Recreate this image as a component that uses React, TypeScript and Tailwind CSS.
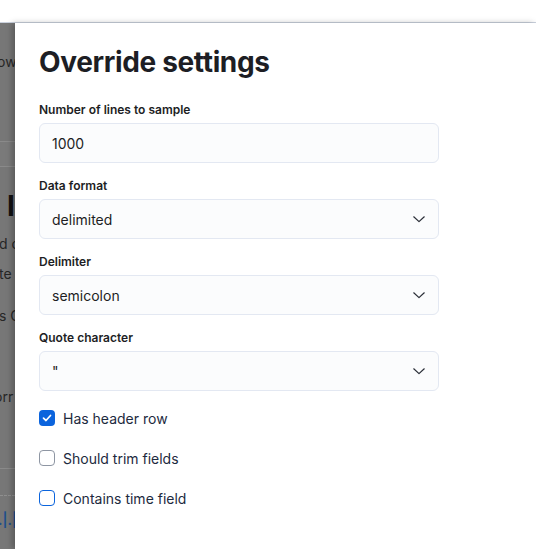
import React from "react";

const font = { fontFamily: "Inter, 'Noto Sans', sans-serif" };

function Chevron() {
  return (
    <svg width="14" height="14" viewBox="0 0 16 16" fill="none">
      <path d="M2 5.5 L8 11 L14 5.5" stroke="#2b2f38" strokeWidth="1.4" strokeLinecap="round" strokeLinejoin="round" />
    </svg>
  );
}

function Field({ label, value, select }: { label: string; value: string; select?: boolean }) {
  return (
    <div className="mb-[16px] w-[400px]">
      <div className="text-[12px] leading-[14px] font-semibold text-[#1d1e24] mb-[6px]">{label}</div>
      <div className="h-[40px] rounded-[6px] border border-[#e3e8f2] bg-[#fbfcfd] flex items-center pl-[12px] pr-[12px]">
        <span className="flex-1 text-[14px] text-[#1d1e24]">{value}</span>
        {select && <Chevron />}
      </div>
    </div>
  );
}

function Check({ label, state }: { label: string; state: "checked" | "empty" | "focus" }) {
  return (
    <div className="h-[40px] flex items-center gap-[8px]">
      {state === "checked" ? (
        <div className="w-[16px] h-[16px] rounded-[4px] bg-[#0b64dd] flex items-center justify-center">
          <svg width="10" height="10" viewBox="0 0 10 10" fill="none">
            <path d="M1.5 5.2 L4 7.5 L8.5 2.5" stroke="white" strokeWidth="1.7" strokeLinecap="round" strokeLinejoin="round" />
          </svg>
        </div>
      ) : (
        <div
          className={
            "w-[16px] h-[16px] rounded-[4px] bg-white border " +
            (state === "focus" ? "border-[#0b64dd]" : "border-[#8e96a3]")
          }
        />
      )}
      <span className="text-[14px] text-[#1d2a3e]">{label}</span>
    </div>
  );
}

export default function App() {
  return (
    <div className="w-[536px] h-[549px] overflow-hidden bg-white flex flex-col" style={font}>
      <div className="h-[23px] shrink-0 bg-white border-b border-[#cbd2de]" />
      <div className="flex-1 flex min-h-0">
        <div className="w-[15px] shrink-0 bg-[#777777] overflow-hidden flex flex-col text-[14px] text-[#262626] whitespace-nowrap">
          <div className="h-[28px]" />
          <div className="h-[22px] leading-[22px] ml-[-3px]">ow</div>
          <div className="h-[68px]" />
          <div className="h-[1px] bg-[#8a8a8a]" />
          <div className="h-[24px] bg-[#7a7a7a]" />
          <div className="h-[1px] bg-[#8a8a8a]" />
          <div className="h-[24px]" />
          <div className="h-[30px] leading-[30px] text-[28px] font-bold text-[#111] ml-[7px]">I</div>
          <div className="h-[12px]" />
          <div className="h-[22px] leading-[22px] ml-[-1px]">d c</div>
          <div className="h-[8px]" />
          <div className="h-[22px] leading-[22px] ml-[-1px]">te</div>
          <div className="h-[20px]" />
          <div className="h-[22px] leading-[22px] ml-[-1px]">s C</div>
          <div className="h-[59px]" />
          <div className="h-[22px] leading-[22px] ml-[-6px]">orr</div>
          <div className="h-[60px]" />
          <div className="h-[1px] bg-[#8a8a8a]" />
          <div className="h-[26px]" />
          <div className="h-[1px] border-t border-dashed border-[#8f8f8f]" />
          <div className="h-[14px]" />
          <div className="h-[20px] leading-[20px] text-[#1f4f8c] font-semibold ml-[-2px]">.|.|</div>
        </div>
        <div className="flex-1 bg-white pl-[24px] pt-[22px] shadow-[-3px_0_6px_rgba(0,0,0,0.25)] relative">
          <h2 className="text-[28px] leading-[34px] font-bold text-[#1d1e24] mb-[24px] tracking-[-0.35px]">Override settings</h2>
          <Field label="Number of lines to sample" value="1000" />
          <Field label="Data format" value="delimited" select />
          <Field label="Delimiter" value="semicolon" select />
          <Field label="Quote character" value={'"'} select />
          <div className="mt-[-9px]">
            <Check label="Has header row" state="checked" />
            <Check label="Should trim fields" state="empty" />
            <Check label="Contains time field" state="focus" />
          </div>
        </div>
      </div>
    </div>
  );
}
